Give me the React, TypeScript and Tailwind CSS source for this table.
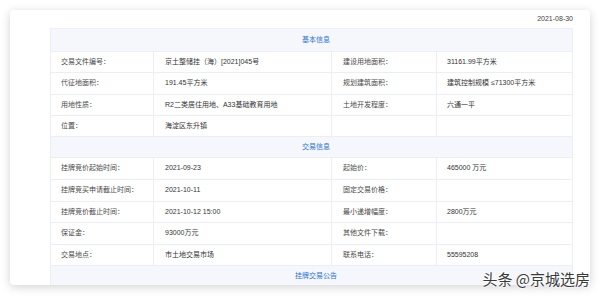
import React from 'react'

type Row = [string, string, string, string]

const jiben: Row[] = [
  ['交易文件编号：', '京土整储挂（海）[2021]045号', '建设用地面积：', '31161.99平方米'],
  ['代征地面积：', '191.45平方米', '规划建筑面积：', '建筑控制规模 ≤71300平方米'],
  ['用地性质：', 'R2二类居住用地、A33基础教育用地', '土地开发程度：', '六通一平'],
  ['位置：', '海淀区东升镇', '', ''],
]

const jiaoyi: Row[] = [
  ['挂牌竞价起始时间：', '2021-09-23', '起始价：', '465000 万元'],
  ['挂牌竞买申请截止时间：', '2021-10-11', '固定交易价格：', ''],
  ['挂牌竞价截止时间：', '2021-10-12 15:00', '最小递增幅度：', '2800万元'],
  ['保证金：', '93000万元', '其他文件下载：', ''],
  ['交易地点：', '市土地交易市场', '联系电话：', '55595208'],
]

const hauteurs1 = ['h-[21px]', 'h-[22px]', 'h-[21px]', 'h-[21px]']
const hauteurs2 = ['h-[22px]', 'h-[22px]', 'h-[21px]', 'h-[22px]', 'h-[21px]']

function Titre({ texte, h }: { texte: string; h: string }) {
  return (
    <div className={`${h} flex items-center justify-center border-b border-[#ebeef5] bg-[#f5f7fc] pl-[9px] text-[7px] text-[#2f74d0]`}>
      {texte}
    </div>
  )
}

function Ligne({ r, h }: { r: Row; h: string }) {
  return (
    <div className={`${h} grid grid-cols-[103px_178px_105px_1fr] border-b border-[#ebeef5] text-[7px]`}>
      <div className="flex items-center border-r border-[#ebeef5] pl-[10px] text-[#4a4a4a]">{r[0]}</div>
      <div className="flex items-center border-r border-[#ebeef5] pl-[11px] text-[#333]">{r[1]}</div>
      <div className="flex items-center border-r border-[#ebeef5] pl-[11px] text-[#4a4a4a]">{r[2]}</div>
      <div className="flex items-center pl-[10px] text-[#333]">{r[3]}</div>
    </div>
  )
}

export default function App() {
  return (
    <div
      className="relative h-[296px] w-[600px] overflow-hidden bg-white pt-[10px] pl-[10px]"
      style={{ fontFamily: '"Liberation Sans", "Noto Sans CJK SC", sans-serif' }}
    >
      <div className="h-[275px] w-[580px] overflow-hidden rounded-[4px] bg-white pl-[40px] pr-[17px] shadow-[0_2px_10px_rgba(0,0,0,0.18)]">
        <div className="flex h-[18px] items-center justify-end text-[7px] text-[#444]">2021-08-30</div>
        <div className="border-x border-t border-[#ebeef5]">
          <Titre texte="基本信息" h="h-[23px]" />
          {jiben.map((r, i) => (
            <Ligne key={i} r={r} h={hauteurs1[i]} />
          ))}
          <Titre texte="交易信息" h="h-[21px]" />
          {jiaoyi.map((r, i) => (
            <Ligne key={i} r={r} h={hauteurs2[i]} />
          ))}
          <Titre texte="挂牌交易公告" h="h-[22px]" />
        </div>
      </div>
      <div
        className="absolute right-[10px] top-[269px] text-[15px] leading-[20px] text-[#3a3a3a]"
        style={{ fontFamily: '"Noto Sans CJK SC", sans-serif', textShadow: '0 0 2px #fff, 0 0 2px #fff, 0 0 3px #fff' }}
      >
        头条 @京城选房
      </div>
    </div>
  )
}
